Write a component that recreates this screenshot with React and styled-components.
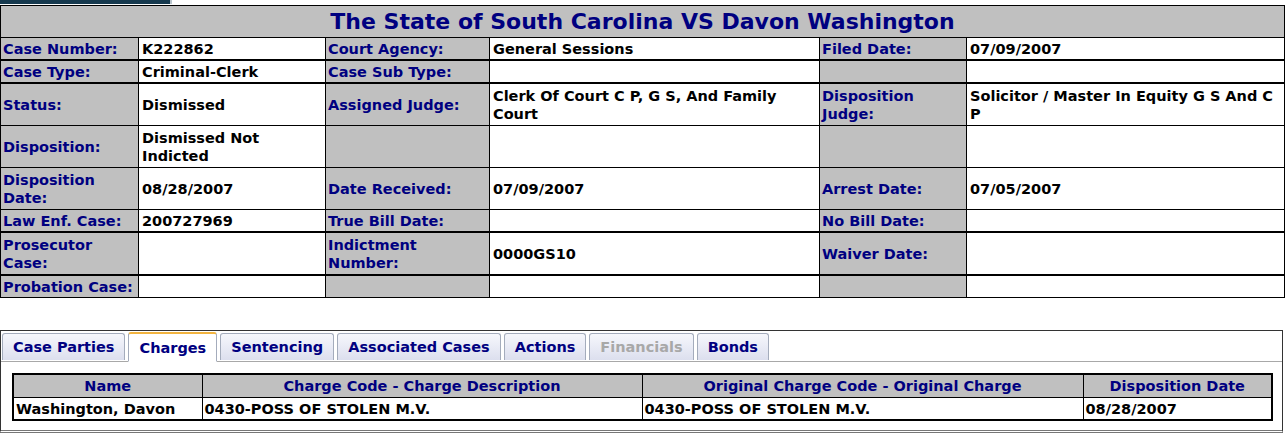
import styled, { createGlobalStyle, css } from "styled-components";

const GlobalStyle = createGlobalStyle`
  body {
    margin: 0;
    background: #fff;
    font-family: "DejaVu Sans", Verdana, sans-serif;
    font-size: 14.5px;
    font-weight: bold;
  }
`;

const Page = styled.div`
  width: 1285px;
  display: flex;
  flex-direction: column;
`;

const TopStub = styled.div`
  width: 170px;
  height: 4px;
  background: #173a4f;
  border-right: 2px solid #b8c4cc;
  margin-bottom: 1px;
`;

const CaseTable = styled.table`
  width: 1284px;
  border-collapse: collapse;
  table-layout: fixed;
  border: 1px solid #000;
`;

const TitleCell = styled.th`
  background: #c0c0c0;
  color: #000080;
  font-size: 22px;
  height: 31px;
  padding: 0;
  text-align: center;
  vertical-align: middle;
  border: 1px solid #000;
`;

const Row = styled.tr`
  ${({ thick }) =>
    thick &&
    css`
      & > td {
        border-bottom-width: 2px;
      }
    `}
`;

const Label = styled.td`
  background: #c0c0c0;
  color: #000080;
  border: 1px solid #000;
  padding: 1px 2px;
  line-height: 18px;
  vertical-align: middle;
  height: ${({ tall }) => (tall ? "39px" : "19px")};
`;

const Value = styled.td`
  background: #fff;
  color: #000;
  border: 1px solid #000;
  padding: 1px 3px;
  line-height: 18px;
  vertical-align: middle;
`;

const Spacer = styled.div`
  height: 32px;
`;

const TabPanel = styled.div`
  border: 1px solid #333;
  border-bottom: 3px double #777;
  width: 1281px;
  padding-bottom: 9px;
`;

const TabStrip = styled.div`
  display: flex;
  gap: 3px;
  padding: 2px 0 0 1px;
  border-bottom: 1px solid #a8a8a8;
`;

const Tab = styled.div`
  height: 26px;
  padding: 0 10px;
  display: flex;
  align-items: center;
  color: #000080;
  border: 1px solid #a4acbc;
  border-bottom: none;
  border-radius: 3px 3px 0 0;
  background: linear-gradient(#f6f7fc, #dcdfee);
  margin-bottom: -1px;

  ${({ active }) =>
    active &&
    css`
      background: #fff;
      border-top: 2px solid #f2b440;
      height: 27px;
      padding: 0 10px;
      margin-top: -1px;
      border-bottom: 1px solid #fff;
    `}

  ${({ disabled }) =>
    disabled &&
    css`
      color: #a8a8a8;
    `}
`;

const ChargeTable = styled.table`
  margin: 11px 0 0 11px;
  width: 1259px;
  border-collapse: collapse;
  table-layout: fixed;
  border: 2px solid #000;
`;

const HeadCell = styled.th`
  background: #c0c0c0;
  color: #000080;
  text-align: center;
  border: 1px solid #000;
  height: 22px;
  padding: 0 2px;
`;

const DataCell = styled.td`
  border: 1px solid #000;
  height: 21px;
  padding: 0 2px;
  color: #000;
`;

const rows = [
  { cells: ["Case Number:", "K222862", "Court Agency:", "General Sessions", "Filed Date:", "07/09/2007"], thick: true },
  { cells: ["Case Type:", "Criminal-Clerk", "Case Sub Type:", "", "", ""], thick: true },
  { cells: ["Status:", "Dismissed", "Assigned Judge:", "Clerk Of Court C P, G S, And Family Court", "Disposition Judge:", "Solicitor / Master In Equity G S And C P"], tall: true },
  { cells: ["Disposition:", "Dismissed Not Indicted", "", "", "", ""], tall: true },
  { cells: ["Disposition Date:", "08/28/2007", "Date Received:", "07/09/2007", "Arrest Date:", "07/05/2007"], tall: true },
  { cells: ["Law Enf. Case:", "200727969", "True Bill Date:", "", "No Bill Date:", ""], thick: true },
  { cells: ["Prosecutor Case:", "", "Indictment Number:", "0000GS10", "Waiver Date:", ""], tall: true, thick: true },
  { cells: ["Probation Case:", "", "", "", "", ""] },
];

const tabs = [
  { name: "Case Parties" },
  { name: "Charges", active: true },
  { name: "Sentencing" },
  { name: "Associated Cases" },
  { name: "Actions" },
  { name: "Financials", disabled: true },
  { name: "Bonds" },
];

const App = () => {
  return (
    <Page>
      <GlobalStyle />
      <TopStub />
      <CaseTable>
        <colgroup>
          <col style={{ width: 138 }} />
          <col style={{ width: 187 }} />
          <col style={{ width: 164 }} />
          <col style={{ width: 330 }} />
          <col style={{ width: 147 }} />
          <col style={{ width: 318 }} />
        </colgroup>
        <thead>
          <tr>
            <TitleCell colSpan={6}>The State of South Carolina VS Davon Washington</TitleCell>
          </tr>
        </thead>
        <tbody>
          {rows.map((row, i) => (
            <Row key={i} thick={row.thick}>
              {row.cells.map((text, j) =>
                j % 2 === 0 ? (
                  <Label key={j} tall={row.tall}>{text}</Label>
                ) : (
                  <Value key={j}>{text}</Value>
                )
              )}
            </Row>
          ))}
        </tbody>
      </CaseTable>
      <Spacer />
      <TabPanel>
        <TabStrip>
          {tabs.map((tab) => (
            <Tab key={tab.name} active={tab.active} disabled={tab.disabled}>
              {tab.name}
            </Tab>
          ))}
        </TabStrip>
        <ChargeTable>
          <colgroup>
            <col style={{ width: 189 }} />
            <col style={{ width: 440 }} />
            <col style={{ width: 441 }} />
            <col style={{ width: 189 }} />
          </colgroup>
          <thead>
            <tr>
              <HeadCell>Name</HeadCell>
              <HeadCell>Charge Code - Charge Description</HeadCell>
              <HeadCell>Original Charge Code - Original Charge</HeadCell>
              <HeadCell>Disposition Date</HeadCell>
            </tr>
          </thead>
          <tbody>
            <tr>
              <DataCell>Washington, Davon</DataCell>
              <DataCell>0430-POSS OF STOLEN M.V.</DataCell>
              <DataCell>0430-POSS OF STOLEN M.V.</DataCell>
              <DataCell>08/28/2007</DataCell>
            </tr>
          </tbody>
        </ChargeTable>
      </TabPanel>
    </Page>
  );
};

export default App;
